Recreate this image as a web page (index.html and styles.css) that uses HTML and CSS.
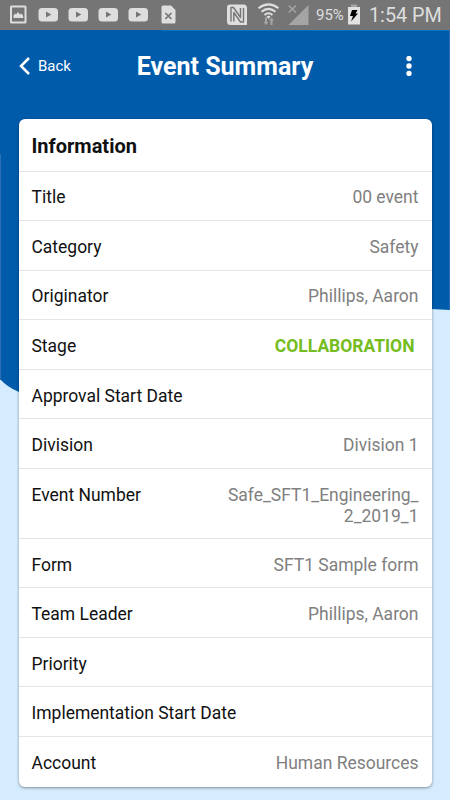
FILE: index.html
```html
<!DOCTYPE html>
<html lang="en">
<head>
<meta charset="utf-8">
<title>Event Summary</title>
<link rel="stylesheet" href="styles.css">
</head>
<body>
<div class="screen">
  <svg class="backdrop" viewBox="0 0 450 770" aria-hidden="true">
    <path fill="#005baa" d="M0 0H450V280L431 279L19 362Q7 357 0 349Z"/>
    <path fill="#0870bd" d="M162 0H450V1H162Z"/>
    <path fill="#2b70b5" d="M0 124H1V350H0ZM449 0H450V280H449Z"/>
  </svg>
  <div class="status">
    <svg class="notifications" width="180" height="30" viewBox="0 0 180 30" fill="#dedede" aria-hidden="true">
      <path fill-rule="evenodd" d="M11.500 5.500H25Q26.500 5.500 26.500 7V22Q26.500 23.500 25 23.500H11.500Q10 23.500 10 22V7Q10 5.500 11.500 5.500ZM12 7.500V21.500H24.500V7.500Z"/>
      <path d="M13.500 18V15.500L15 13.500L16 14.500L18 12L20 14.500L21.500 13.500L23.200 16V18Z"/>
      <g id="video"><rect x="38.500" y="8" width="19.500" height="13.500" rx="3.500"/><path fill="#757575" d="M46 11.500V17.500L51.300 14.500Z"/></g>
      <use href="#video" x="30"/><use href="#video" x="60"/><use href="#video" x="90"/>
      <path d="M163 5.500H171L175.500 10V22Q175.500 23.500 174 23.500H163Q161.500 23.500 161.500 22V7Q161.500 5.500 163 5.500Z"/>
      <path d="M165.300 13L171.500 19M171.500 13L165.300 19" stroke="#757575" stroke-width="1.700"/>
    </svg>
    <svg class="signals" width="90" height="30" viewBox="225 0 90 30" aria-hidden="true">
      <path fill="#dedede" d="M230 4.500H243.500Q247 4.500 247 8V25H230.500Q227 25 227 21.500V7.500Q227 4.500 230 4.500Z"/>
      <path fill="none" stroke="#757575" stroke-width="1.400" stroke-linejoin="round" d="M231 21.500V7.500H233.500L240.500 17.500V8M243.500 8V22H240.500L233.800 12.500V21.500"/>
      <g fill="none" stroke="#dedede" stroke-width="2"><path d="M258.500 8.200Q268.500 0.500 278.500 8.200M261.500 11.700Q268.500 6 275.500 11.700M264.500 15Q268.500 11.500 272.500 15"/></g>
      <path fill="#dedede" d="M266.500 16.500Q268.500 15 270.500 16.500L268.500 19Z"/>
      <path fill="#a5a5a5" d="M265 17.500H267V22H268.500L266 25L263.500 22H265ZM270.500 25V20.500H269L271.500 17.500L274 20.500H272.500V25Z"/>
      <path fill="#a5a5a5" d="M308.500 5V25H288.500Z"/>
      <path d="M288.700 5.500L296 12.500M296 5.500L288.700 12.500" stroke="#a5a5a5" stroke-width="1.500"/>
    </svg>
    <span class="percent">95%</span>
    <svg class="battery" width="14" height="22" viewBox="0 0 14 22" aria-hidden="true">
      <path fill="#a5a5a5" d="M4 .5H10V3H4Z"/><path fill="#e2e2e2" d="M1 3H13V20.500H1Z"/><path fill="#000" d="M5 6H10.500L8.500 9.500H11L4 17.500L6 12H3Z"/>
    </svg>
    <span class="clock">1:54 PM</span>
  </div>
  <header class="appbar">
    <div class="back"><svg width="11" height="18" viewBox="0 0 11 18" fill="none" stroke="#fff" stroke-width="2.500"><path d="M10 1L2 9L10 17"/></svg><span>Back</span></div>
    <h1>Event Summary</h1>
    <svg class="menu" width="6" height="20" viewBox="0 0 6 20" fill="#fff"><circle cx="3" cy="2.500" r="2.700"/><circle cx="3" cy="10" r="2.700"/><circle cx="3" cy="17.500" r="2.700"/></svg>
  </header>
  <main class="card">
    <h2>Information</h2>
    <div class="row"><span>Title</span><span class="value">00 event</span></div>
    <div class="row"><span>Category</span><span class="value">Safety</span></div>
    <div class="row"><span>Originator</span><span class="value">Phillips, Aaron</span></div>
    <div class="row"><span>Stage</span><span class="value stage">COLLABORATION</span></div>
    <div class="row"><span>Approval Start Date</span></div>
    <div class="row"><span>Division</span><span class="value">Division 1</span></div>
    <div class="row tall"><span>Event Number</span><span class="value">Safe_SFT1_Engineering_<br>2_2019_1</span></div>
    <div class="row"><span>Form</span><span class="value">SFT1 Sample form</span></div>
    <div class="row"><span>Team Leader</span><span class="value">Phillips, Aaron</span></div>
    <div class="row"><span>Priority</span></div>
    <div class="row"><span>Implementation Start Date</span></div>
    <div class="row"><span>Account</span><span class="value">Human Resources</span></div>
  </main>
</div>
</body>
</html>
```
FILE: styles.css
```css
* { box-sizing: border-box; }
body { margin: 0; font-family: Roboto, sans-serif; }
.screen { position: relative; width: 450px; height: 800px; overflow: hidden; background: #d4ecfd; }
.backdrop { position: absolute; top: 30px; left: 0; width: 450px; height: 770px; }
.status { position: relative; display: flex; align-items: center; height: 30px; background: #757575; color: #dedede; white-space: nowrap; }
.signals { margin-left: 45px; }
.status svg { flex: none; }
.percent { width: 31px; margin-left: 1px; font-size: 15px; }
.battery { margin-left: 0; }
.clock { margin-left: 8px; font-size: 19.800px; }
.appbar { position: relative; display: grid; grid-template-columns: 88px 1fr 88px; align-items: center; height: 88.500px; padding-bottom: 17px; color: #fff; }
.back { display: flex; align-items: center; gap: 8px; padding-left: 19px; font-size: 15px; }
.appbar h1 { margin: 0; padding-top: 2px; font-size: 25px; font-weight: 700; line-height: 30px; text-align: center; white-space: nowrap; }
.menu { margin-left: 44px; }
.card { position: relative; width: 412.500px; margin-left: 19px; background: #fff; border-radius: 6px; box-shadow: 0 1px 3px rgba(0, 0, 0, .4); color: #111; font-size: 17.480px; line-height: 21px; overflow: hidden; }
.card h2 { height: 53px; margin: 0; padding: 17px 12.500px 0; border-bottom: 1px solid #e3e6e8; font-size: 20px; line-height: 21px; font-weight: 700; }
.row { display: flex; justify-content: space-between; height: 49.550px; padding: 15.900px 13px 0 12.500px; border-bottom: 1px solid #e3e6e8; white-space: nowrap; }
.row:last-child { border-bottom: 0; }
.tall { height: 70px; }
.value { color: #808080; text-align: right; }
.stage { margin-right: 4px; color: #75bc21; font-weight: 700; }
```
